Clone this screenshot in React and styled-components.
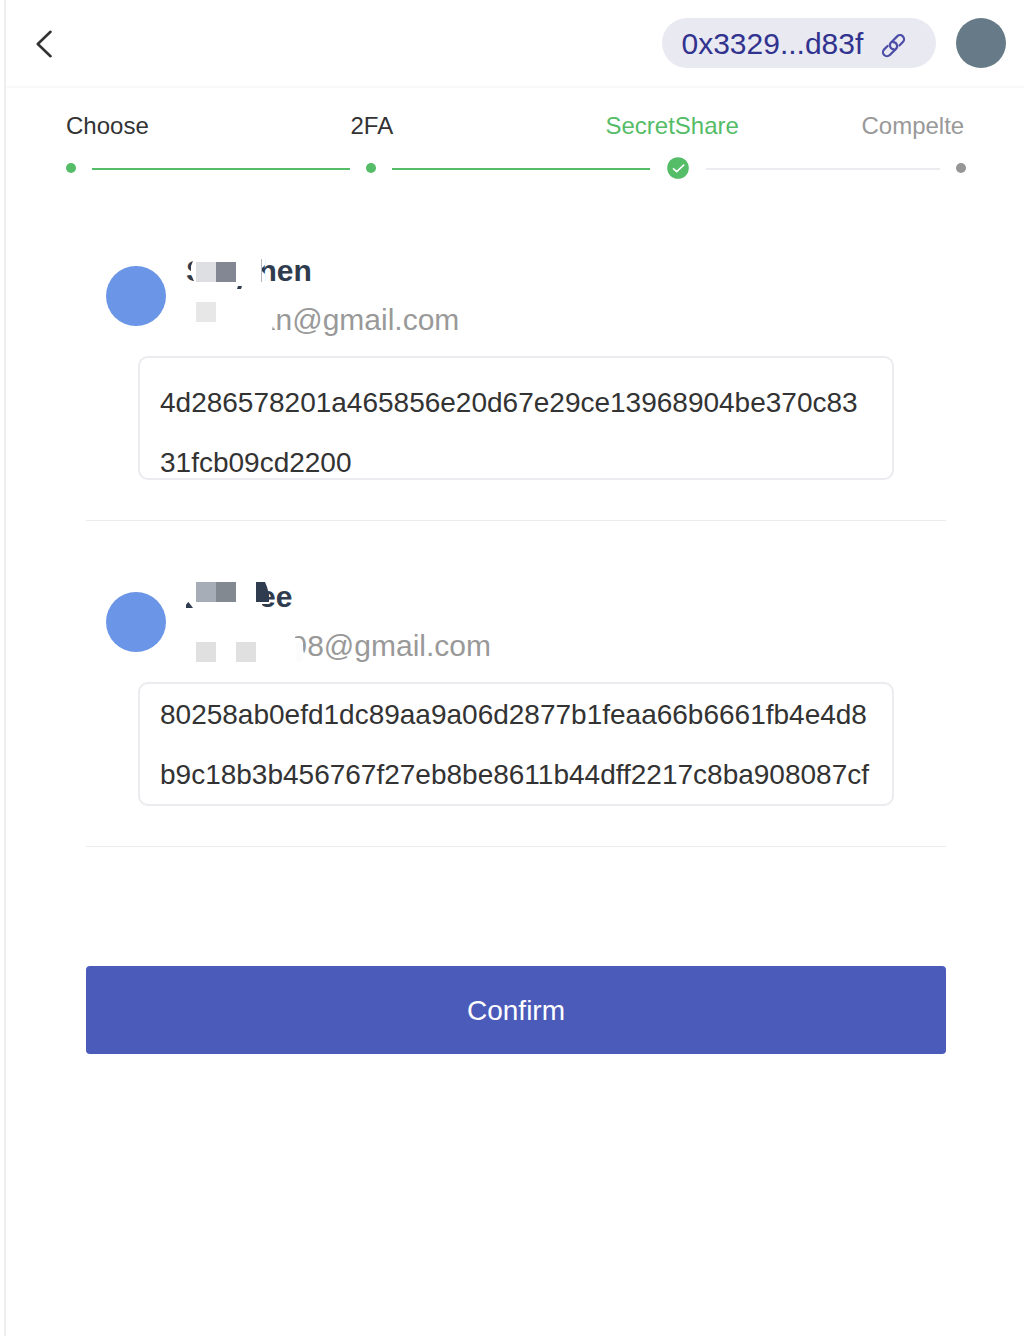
import React from "react";
import styled, { createGlobalStyle } from "styled-components";

const Global = createGlobalStyle`
  * { box-sizing: border-box; }
  body { margin: 0; background: #fff; font-family: "Liberation Sans", Arial, Helvetica, sans-serif; }
`;
const Page = styled.div`
  margin-left: 4px; width: 1020px; height: 1336px; border-left: 2px solid #efeff2;
`;
const Header = styled.header`
  display: flex; align-items: center; height: 88px; padding: 0 18px 0 30px;
  border-bottom: 2px solid #f9f9fa;
`;
const Back = styled.button`
  display: flex; padding: 0; border: 0; background: none; margin: 2px auto 0 0;
`;
const Address = styled.div`
  display: flex; align-items: center; width: 274px; height: 50px; padding-left: 19.5px;
  margin-right: 20px; border-radius: 25px; background: #e9e9f2; color: #31338f;
  font-size: 30px; line-height: 50px;
  span { width: 182.5px; margin: 2px 17px 0 0; white-space: nowrap; }
  svg { margin-top: 5px; }
`;
const Circle = styled.div`
  flex: none; width: ${(p) => p.$size}px; height: ${(p) => p.$size}px; border-radius: 50%;
  background: ${(p) => p.$color};
`;
const Labels = styled.div`
  display: grid; grid-template-columns: 284.5px 255px 256px auto; padding: 22px 0 0 60px;
  font-size: 24px; line-height: 32px;
`;
const Label = styled.span`color: ${(p) => p.$color};`;
const Track = styled.div`
  display: flex; align-items: center; height: 22px; margin: 15px 0 0 60px;
`;
const Line = styled.div`
  width: ${(p) => p.$w}px; height: 2px; background: ${(p) => p.$color};
  margin: 2px ${(p) => p.$right}px 0 ${(p) => p.$left}px;
`;
const List = styled.main`width: 860px; margin: 41px 0 0 80px;`;
const Item = styled.section`
  padding: ${(p) => p.$top}px 52px 40px 20px; border-bottom: 1px solid #ebebf0;
`;
const Person = styled.div`display: flex; height: 110px; padding-top: 20px; gap: 20px;`;
const Identity = styled.div`margin-top: -20px;`;
const Row = styled.div`
  position: relative; width: 340px; overflow: hidden; white-space: nowrap; font-size: 30px;
  padding-left: ${(p) => p.$indent}px;
`;
const Name = styled(Row)`height: 48px; line-height: 50px; font-weight: 700; color: #2f3c4f;`;
const Email = styled(Row)`height: 42px; line-height: 52px; color: #999;`;
const Patch = styled.i`
  position: absolute; left: ${(p) => p.$x}px; top: ${(p) => p.$y}px;
  width: ${(p) => p.$w}px; height: ${(p) => p.$h}px; background: ${(p) => p.$color};
  clip-path: ${(p) => p.$clip || "none"};
`;
const Fragment = styled.span`
  position: absolute; left: 0; top: 0; clip-path: ${(p) => p.$clip};
`;
const Share = styled.div`
  width: 756px; height: 124px; margin: 0 0 0 32px; padding: ${(p) => p.$top}px 20px 0;
  border: 2px solid #ebebf0; border-radius: 10px; overflow: hidden;
  font-size: 28px; line-height: 60px; color: #333;
  div { white-space: nowrap; }
`;
const Confirm = styled.button`
  display: block; width: 860px; height: 88px; margin: 119px 0 0; padding: 2px 0 0; border: 0;
  border-radius: 4px; background: #4a5bb9; color: #fff;
  font: 28px "Liberation Sans", Arial, sans-serif;
`;
const green = "#55bc68";
const ink = "#2f3c4f";

export default function App() {
  return (
    <>
      <Global />
      <Page>
        <Header>
          <Back aria-label="Back">
            <svg width="18" height="28" viewBox="0 0 18 28" fill="none" stroke="#333" strokeWidth="2.6" strokeLinecap="round" strokeLinejoin="round">
              <path d="M14.5 1.8 1.8 14l12.7 12.2" />
            </svg>
          </Back>
          <Address>
            <span>0x3329...d83f</span>
            <svg width="26" height="26" viewBox="0 0 26 26" fill="none" stroke="#4b4da6" strokeWidth="2.2" strokeLinecap="round">
              <g transform="translate(12.5 12.7) rotate(-45)">
                <path d="M4.4 4H9.2A4 4 0 0 0 9.2 -4H0.500A4 4 0 0 0 -2.300 2.800" />
                <path d="M-4.4 -4H-9.2A4 4 0 0 0 -9.2 4H-0.500A4 4 0 0 0 2.300 -2.800" />
              </g>
            </svg>
          </Address>
          <Circle $size={50} $color="#667b87" />
        </Header>
        <Labels>
          <Label $color="#333">Choose</Label>
          <Label $color="#333">2FA</Label>
          <Label $color={green}>SecretShare</Label>
          <Label $color="#999">Compelte</Label>
        </Labels>
        <Track>
          <Circle $size={10} $color={green} />
          <Line $w={258} $left={16} $right={16} $color={green} />
          <Circle $size={10} $color={green} />
          <Line $w={258} $left={16} $right={17} $color={green} />
          <svg width="22" height="22" viewBox="0 0 22 22">
            <circle cx="11" cy="11" r="10.8" fill={green} />
            <path d="m6 11.3 3.7 3.4L17.2 7.7" fill="none" stroke="#fff" strokeWidth="1.6" />
          </svg>
          <Line $w={234} $left={17} $right={16} $color="#ebebf0" />
          <Circle $size={10} $color="#969696" />
        </Track>
        <List>
          <Item $top={26}>
            <Person>
              <Circle $size={60} $color="#6b95e6" />
              <Identity>
                <Name $indent={72.5}>
                  <Fragment $clip="polygon(0 0, 10px 0, 10px 12px, 7px 15px, 5px 20px, 5px 27px, 7px 33px, 9px 37px, 9px 48px, 0 48px)">S</Fragment>
                  <Patch $x={10} $y={16} $w={20} $h={20} $color="#dddfe2" />
                  <Patch $x={30} $y={16} $w={20} $h={20} $color="#828793" />
                  <Patch $x={51} $y={40} $w={5} $h={3} $color={ink} $clip="polygon(20% 0, 100% 0, 80% 100%, 0 100%)" />
                  hen
                  <Patch $x={70} $y={10} $w={9} $h={30} $color="#fff" $clip="polygon(0 0, 9px 0, 9px 9px, 6px 12px, 6px 15px, 9px 18px, 9px 30px, 0 30px)" />
                  <Patch $x={75} $y={13} $w={1} $h={23} $color="#b4b8be" />
                </Name>
                <Email $indent={89.5}>
                  <Patch $x={10} $y={8} $w={20} $h={20} $color="#e7e7e7" />
                  <Patch $x={86} $y={32} $w={3} $h={4} $color="#999" $clip="polygon(30% 0, 60% 60%, 100% 70%, 100% 100%, 0 100%)" />
                  n@gmail.com
                </Email>
              </Identity>
            </Person>
            <Share $top={15}>
              <div>4d286578201a465856e20d67e29ce13968904be370c83</div>
              <div>31fcb09cd2200</div>
            </Share>
          </Item>
          <Item $top={51}>
            <Person>
              <Circle $size={60} $color="#6b95e6" />
              <Identity>
                <Name $indent={73}>
                  ee
                  <Patch $x={0} $y={30} $w={7} $h={6} $color={ink} $clip="polygon(35% 0, 100% 100%, 0 100%, 0 40%)" />
                  <Patch $x={10} $y={10} $w={20} $h={20} $color="#a7adb6" />
                  <Patch $x={30} $y={10} $w={20} $h={20} $color="#828991" />
                  <Patch $x={70} $y={10} $w={6} $h={30} $color="#fff" />
                  <Patch $x={70} $y={30} $w={12} $h={2} $color="#fff" />
                  <Patch $x={70} $y={10} $w={13} $h={20} $color={ink} $clip="polygon(0 0, 9px 0, 11px 5px, 13px 12px, 13px 20px, 0 20px)" />
                </Name>
                <Email $indent={104.5}>
                  <Patch $x={10} $y={22} $w={20} $h={20} $color="#e0e0e0" />
                  <Patch $x={50} $y={22} $w={20} $h={20} $color="#e0e0e0" />
                  98@gmail.com
                  <Patch $x={102} $y={10} $w={18} $h={32} $color="#fff" $clip="polygon(0 0, 7px 0, 7px 8px, 12px 8px, 14px 11px, 15px 19px, 16px 24px, 18px 26px, 18px 32px, 0 32px)" />
                  <Patch $x={110} $y={22} $w={7} $h={20} $color="#fcfcfc" />
                </Email>
              </Identity>
            </Person>
            <Share $top={1}>
              <div>80258ab0efd1dc89aa9a06d2877b1feaa66b6661fb4e4d8</div>
              <div>b9c18b3b456767f27eb8be8611b44dff2217c8ba908087cf</div>
            </Share>
          </Item>
          <Confirm>Confirm</Confirm>
        </List>
      </Page>
    </>
  );
}
